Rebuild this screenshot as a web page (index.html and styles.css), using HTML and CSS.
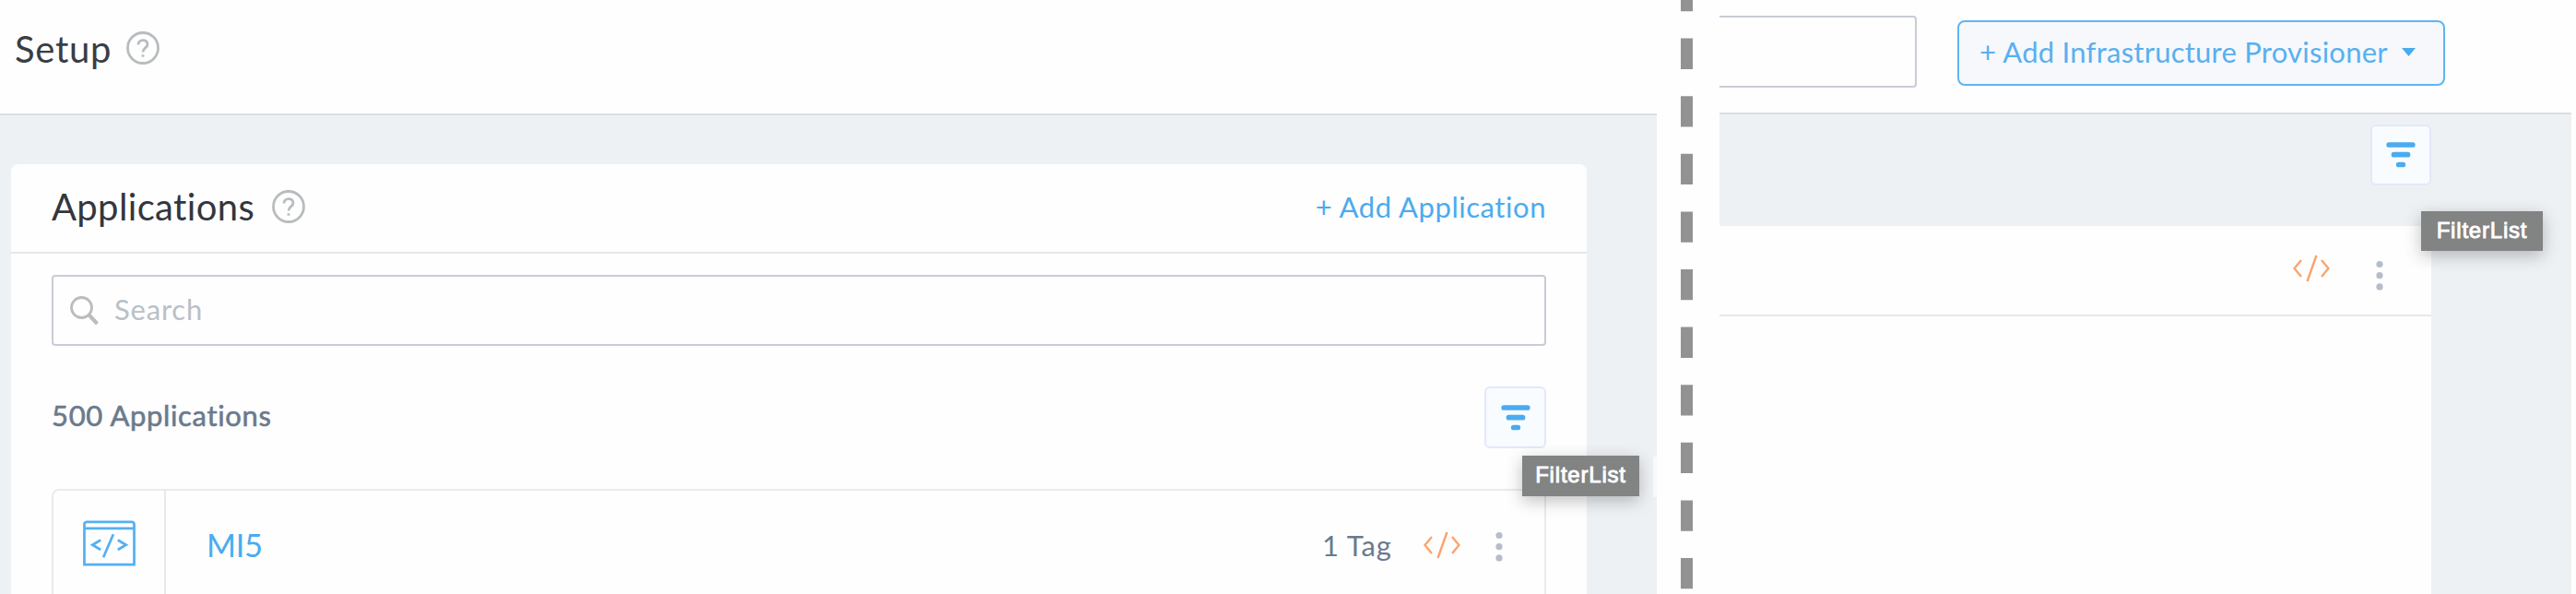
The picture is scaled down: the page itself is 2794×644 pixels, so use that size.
FILE: index.html
```html
<!DOCTYPE html>
<html lang="en">
<head>
<meta charset="utf-8">
<title>Setup</title>
<link rel="stylesheet" href="styles.css">
</head>
<body>
<svg class="defs" width="0" height="0">
  <symbol id="help" viewBox="0 0 36 42"><ellipse cx="18" cy="21" rx="16.5" ry="16.5"/><path d="M13 17.5c0-6.500 10-6.500 10-.5 0 4-5 3.800-5 8.500M18 28.300v2.400"/></symbol>
  <symbol id="filter" viewBox="0 0 32 28"><path d="M3.200 3h25.600M8.500 13.700h15M13.700 24.500h4.600"/></symbol>
  <symbol id="code" viewBox="0 0 40 30"><path d="M9 6L1.500 15 9 24M25.500 1l-10 28M31 6l7.500 9-7.500 9"/></symbol>
  <symbol id="dots" viewBox="0 0 8 34"><circle cx="4" cy="4.500" r="3.600"/><circle cx="4" cy="16.700" r="3.600"/><circle cx="4" cy="28.900" r="3.600"/></symbol>
</svg>
<main class="comparison">
  <section class="pane pane-setup">
    <header class="topbar">
      <h1 class="page-title">Setup</h1>
      <svg class="help"><use href="#help"/></svg>
    </header>
    <div class="card">
      <div class="card-head">
        <h2 class="card-title">Applications</h2>
        <svg class="help"><use href="#help"/></svg>
        <a class="add-link">+ Add Application</a>
      </div>
      <div class="card-body">
        <div class="search">
          <svg class="search-icon" viewBox="0 0 32 34"><circle cx="12.500" cy="13.500" r="11"/><path class="handle" d="M20.500 21.500l9 9.500"/></svg>
          <span class="placeholder">Search</span>
        </div>
        <div class="summary">
          <span class="count">500 Applications</span>
          <button class="filter-button"><svg class="filter-icon"><use href="#filter"/></svg><span class="tooltip">FilterList</span></button>
        </div>
        <div class="app-row">
          <div class="app-icon">
            <svg class="window-icon" viewBox="0 0 58 50"><path d="M1.500 48.500V4q0-2.500 3-2.500h49q3 0 3 2.500v44.500zM1.500 8.500h55"/><path d="M19.500 21.500l-9 5.300 9 5.300M33.500 15l-11 25.500M38.500 21.500l9 5.300-9 5.300"/></svg>
          </div>
          <a class="app-name">MI5</a>
          <span class="tag">1 Tag</span>
          <svg class="code-icon"><use href="#code"/></svg>
          <svg class="dots"><use href="#dots"/></svg>
        </div>
      </div>
    </div>
  </section>
  <div class="divider"><svg width="13" height="644"><line x1="6.500" y1="-21" x2="6.500" y2="665"/></svg></div>
  <section class="pane pane-provisioners">
    <header class="topbar topbar-right">
      <div class="input"></div>
      <button class="add-button"><span class="add-label">+ Add Infrastructure Provisioner</span><svg class="caret" viewBox="0 0 15 9"><path d="M0 0h15L7.500 9z"/></svg></button>
    </header>
    <div class="content">
      <div class="toolbar">
        <button class="filter-button"><svg class="filter-icon"><use href="#filter"/></svg><span class="tooltip tooltip-low">FilterList</span></button>
      </div>
      <div class="list">
        <div class="list-row">
          <svg class="code-icon"><use href="#code"/></svg>
          <svg class="dots"><use href="#dots"/></svg>
        </div>
      </div>
    </div>
  </section>
</main>
</body>
</html>
```
FILE: styles.css
```css
* { box-sizing: border-box; }
body { margin: 0; background: #fefefe; font-family: Lato, "Open Sans", sans-serif; font-variant-ligatures: none; overflow: hidden; }
.defs { display: block; position: absolute; }
svg { display: block; flex: none; fill: none; }
button { font: inherit; font-variant-ligatures: none; padding: 0; }
h1, h2 { margin: 0; font-weight: 400; }
h1, h2, span, a { white-space: nowrap; }
.comparison { display: flex; width: 2794px; height: 644px; overflow: hidden; }
.pane { height: 644px; background: #edf1f4; }
.pane-setup { width: 1797px; position: relative; }
.pane-setup::after { content: ""; position: absolute; right: 0; top: 495px; width: 4px; height: 44px; background: #fafafa; }
.pane-provisioners { width: 924px; }
.topbar { display: flex; align-items: flex-start; height: 125px; padding: 29px 0 0 16px; background: #fefefe; border-bottom: 2px solid #dbdfe3; }
.page-title { width: 121px; font-size: 40px; line-height: 48px; letter-spacing: .7px; color: #3a3d44; }
.help { width: 36px; height: 42px; stroke: #b9bcbe; stroke-width: 2.800; }
.topbar .help { margin-top: 2px; }
.card { width: 1709px; height: 466px; margin: 53px 0 0 12px; background: #fefefe; border-radius: 8px 8px 0 0; }
.card-head { display: flex; align-items: center; height: 97px; padding: 0 44px 4px 44px; border-bottom: 2px solid #e5e8ec; }
.card-title { width: 239px; font-size: 40px; line-height: 48px; letter-spacing: .35px; color: #33363d; }
.card-head .help { margin-top: 0; }
.add-link { margin-left: auto; font-size: 31px; line-height: 38px; letter-spacing: .55px; color: #4aabf0; }
.card-body { padding: 23px 44px 0; }
.search { display: flex; align-items: center; height: 77px; padding: 0 18px; border: 2px solid #c8ccd7; border-radius: 4px; }
.search-icon { width: 32px; height: 34px; stroke: #babcbd; stroke-width: 2.800; }
.handle { stroke-width: 4; }
.placeholder { margin: -3px 0 0 16px; font-size: 31px; line-height: 38px; letter-spacing: .8px; color: #b8c0c8; }
.summary { display: flex; align-items: flex-start; justify-content: space-between; height: 155px; padding-top: 44px; }
.count { margin-top: 12px; font-size: 31px; line-height: 38px; letter-spacing: .65px; color: #6b7a8d; -webkit-text-stroke: .6px #6b7a8d; }
.filter-button { position: relative; display: flex; justify-content: center; width: 67px; height: 67px; padding-top: 18px; background: #f8fcff; border: 2px solid #e3e8fb; border-radius: 6px; }
.filter-icon { width: 32px; height: 28px; stroke: #4aabf0; stroke-width: 5.700; stroke-linecap: round; }
.tooltip { position: absolute; z-index: 2; left: 39px; top: 73px; width: 127px; height: 44px; background: #828383; color: #fff; font: 500 24px/42px "Liberation Sans", Arial, sans-serif; letter-spacing: .8px; -webkit-text-stroke: .9px #fff; text-align: center; box-shadow: 0 5px 18px rgba(0, 0, 0, .25); }
.tooltip-low { left: 53px; top: 92px; width: 132px; height: 43px; }
.app-row { display: flex; align-items: stretch; height: 130px; border: 2px solid #e8ebef; border-radius: 8px; }
.app-icon { display: flex; justify-content: center; width: 122px; padding-top: 32px; border-right: 2px solid #e5e8ec; }
.window-icon { width: 57px; height: 50px; stroke: #55b0f2; stroke-width: 2.800; }
.app-name { margin: 38px 0 0 44px; font-size: 34.5px; line-height: 42px; letter-spacing: -.4px; color: #4aabf0; }
.tag { width: 77px; margin: 40px 33px 0 auto; font-size: 31px; line-height: 38px; letter-spacing: .9px; color: #6b7a8d; }
.code-icon { width: 40px; height: 30px; stroke: #fba36d; stroke-width: 2.400; }
.app-row .code-icon { margin-top: 44px; }
.dots { width: 8px; height: 34px; fill: #b6bdca; }
.app-row .dots { margin: 44px 45px 0 38px; }
.divider { width: 68px; padding-left: 26px; }
.divider line { stroke: #929292; stroke-width: 13; stroke-dasharray: 33.300 29.300; }
.topbar-right { height: 124px; padding: 17px 0 0; border-color: #dadde1; }
.input { width: 214px; height: 78px; border: 2px solid #c8ccd7; border-left: 0; border-radius: 0 4px 4px 0; }
.add-button { display: flex; align-items: center; width: 529px; height: 71px; margin: 5px 0 0 44px; padding: 0 0 3px 22px; background: #f6f8fb; border: 2px solid #5fb5f3; border-radius: 8px; color: #57b0f1; }
.add-label { width: 458px; text-align: left; font-size: 31px; line-height: 38px; letter-spacing: .24px; }
.caret { width: 15px; height: 9px; fill: #4aabf0; }
.toolbar { display: flex; justify-content: flex-end; height: 121px; padding: 11px 152px 0 0; }
.toolbar .filter-button { width: 66px; height: 66px; padding-top: 17px; }
.list { width: 772px; height: 399px; background: #fefefe; }
.list-row { display: flex; justify-content: flex-end; height: 98px; padding: 31px 52px 0 0; border-bottom: 2px solid #e5e9ed; }
.list-row .dots { margin: 6px 0 0 50px; }
```
